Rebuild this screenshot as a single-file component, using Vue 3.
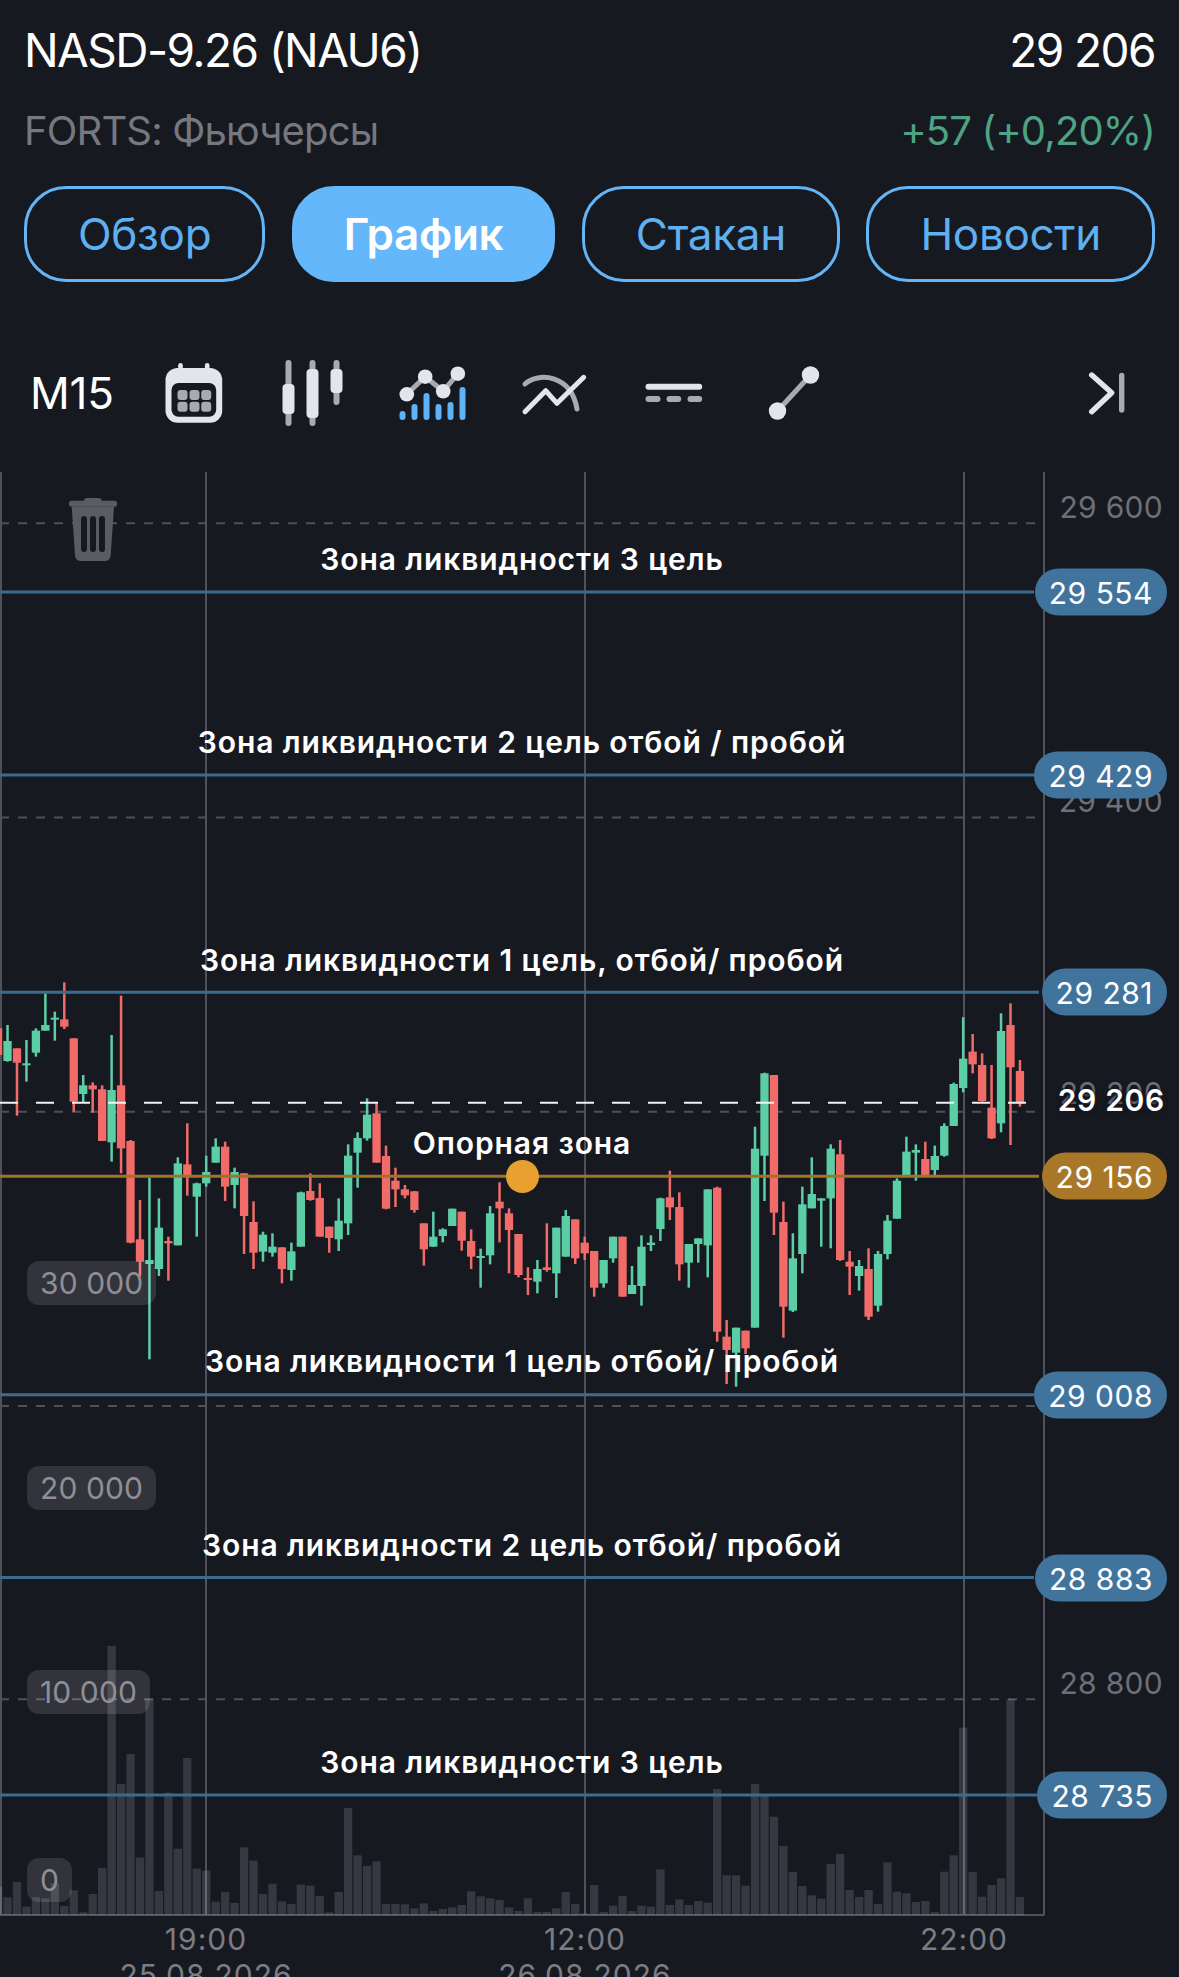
<template>
  <div class="screen">
    <header class="head">
      <div class="row row-title">
        <span>NASD-9.26 (NAU6)</span>
        <span>29 206</span>
      </div>
      <div class="row row-sub">
        <span class="market">FORTS: Фьючерсы</span>
        <span class="change">+57 (+0,20%)</span>
      </div>
      <nav class="tabs">
        <button
          v-for="tab in tabs"
          :key="tab"
          class="tab"
          :class="{ active: tab === activeTab }"
          @click="activeTab = tab"
        >
          {{ tab }}
        </button>
      </nav>
    </header>

    <div class="toolbar">
      <span class="period">M15</span>
      <button class="tool">
        <svg width="72" height="72" viewBox="0 0 72 72">
          <rect x="20.2" y="6" width="4.6" height="12" rx="2.3" fill="#e4e5ec" />
          <rect x="46.9" y="6" width="4.6" height="12" rx="2.3" fill="#e4e5ec" />
          <rect x="7.5" y="11" width="56.7" height="54.7" rx="12" fill="#e4e5ec" />
          <rect x="13.5" y="26" width="44.7" height="33.7" rx="7" fill="#171920" />
          <g fill="#a9aab0">
            <rect x="19.5" y="33" width="10" height="10" rx="3" />
            <rect x="31.5" y="33" width="10" height="10" rx="3" />
            <rect x="43.2" y="33" width="10" height="10" rx="3" />
            <rect x="19.5" y="44.7" width="10" height="10" rx="3" />
            <rect x="31.5" y="44.7" width="10" height="10" rx="3" />
            <rect x="43.2" y="44.7" width="10" height="10" rx="3" />
          </g>
        </svg>
      </button>
      <button class="tool">
        <svg width="72" height="72" viewBox="1.5 0 72 72">
          <g stroke="#a9aab0" stroke-width="6" stroke-linecap="round">
            <path d="M12 6V66M36 6V66M60 6V45" />
          </g>
          <g fill="#e4e5ec">
            <rect x="6" y="27" width="12" height="30" rx="4" />
            <rect x="30" y="12" width="12" height="49" rx="4" />
            <rect x="54" y="12" width="12" height="24" rx="4" />
          </g>
        </svg>
      </button>
      <button class="tool">
        <svg width="72" height="72" viewBox="1.5 0 72 72">
          <path
            d="M10.3 37.3L28.7 19.7L46.7 34.3L61.3 16.7"
            fill="none"
            stroke="#a9aab0"
            stroke-width="5"
          />
          <g fill="#e4e5ec">
            <circle cx="10.3" cy="37.3" r="7.3" />
            <circle cx="28.7" cy="19.7" r="7.3" />
            <circle cx="46.7" cy="34.3" r="7.3" />
            <circle cx="61.3" cy="16.7" r="7.3" />
          </g>
          <path
            d="M6 57V60M18 50V60M30 39V60M42 50V60M54 48V60M66 33V60"
            fill="none"
            stroke="#5db3f5"
            stroke-width="6"
            stroke-linecap="round"
          />
        </svg>
      </button>
      <button class="tool">
        <svg width="72" height="72" viewBox="0 0 72 72" fill="none" stroke-linecap="round" stroke-linejoin="round">
          <path d="M7 27C20 15 53 17 59 52" stroke="#a9aab0" stroke-width="5" />
          <path d="M7 54.7L27.7 33.7L39 46.3L65.7 20.3" stroke="#e4e5ec" stroke-width="5" />
        </svg>
      </button>
      <button class="tool">
        <svg width="72" height="72" viewBox="0 0 72 72" fill="none" stroke-width="6" stroke-linecap="round">
          <path d="M10.5 29.7H61.2" stroke="#e4e5ec" />
          <path d="M10.5 42H19.5M31.5 42H40.2M52.5 42H61.2" stroke="#a9aab0" />
        </svg>
      </button>
      <button class="tool">
        <svg width="72" height="72" viewBox="0 0 72 72">
          <path d="M19.5 54L52.5 18" stroke="#a9aab0" stroke-width="5" />
          <circle cx="19.5" cy="54" r="8.7" fill="#e4e5ec" />
          <circle cx="52.5" cy="18" r="8.7" fill="#e4e5ec" />
        </svg>
      </button>
      <button class="tool tool-end">
        <svg width="72" height="72" viewBox="0 0 72 72" fill="none" stroke-width="5.4" stroke-linecap="round" stroke-linejoin="round">
          <path d="M20.7 18L40.7 35.7L20.7 54.7" stroke="#e4e5ec" />
          <path d="M50.7 18.5V53" stroke="#a9aab0" />
        </svg>
      </button>
    </div>

    <section class="chart">
      <!-- viewBox keeps screen coordinates, so the chart starts at y=470 -->
      <svg class="plot" width="1179" height="1507" viewBox="0 470 1179 1507">
        <g stroke="#50515a" stroke-width="2">
          <path v-for="x in [1, 206, 585, 964, 1044]" :key="x" :d="`M${x} 472V1915`" />
          <path d="M0 1915H1044" />
        </g>
        <path
          v-for="y in gridLines"
          :key="y"
          :d="`M0 ${y}H1036`"
          stroke="#4f5057"
          stroke-width="2"
          stroke-dasharray="9 9"
        />

        <rect
          v-for="bar in volumeBars"
          :key="bar.x"
          :x="bar.x - 4.15"
          :y="bar.y"
          width="8.3"
          :height="1915 - bar.y"
          fill="#e8e8ff"
          fill-opacity="0.15"
        />

        <g v-for="c in candles" :key="c.x" :fill="c.color">
          <rect :x="c.x - 1.25" :y="c.wickTop" width="2.5" :height="c.wickHeight" />
          <rect :x="c.x - 4.15" :y="c.bodyTop" width="8.3" :height="c.bodyHeight" />
        </g>

        <path d="M0 1102.7H1026" stroke="#f2f2f4" stroke-width="2" stroke-dasharray="18 18" />
        <path
          v-for="level in levels"
          :key="level.y"
          :d="`M0 ${level.y}H${level.end}`"
          :stroke="level.gold ? '#a07428' : '#3d6b90'"
          stroke-width="3"
        />

        <g fill="#5b5c63">
          <rect x="84" y="498" width="17.7" height="6" rx="3" />
          <rect x="69" y="500.7" width="48" height="6" rx="2.5" />
          <path
            d="M71.7 506.7H114L110.7 555Q110.3 561 104.5 561H81Q75.5 561 75 555Z"
          />
        </g>
        <g stroke="#171920" stroke-width="6" stroke-linecap="round">
          <path d="M84 519V549M93 519V549M102 519V549" />
        </g>
      </svg>

      <span
        v-for="a in axisLabels"
        :key="a.text"
        class="axis-label"
        :style="{ top: a.y - 470 + 'px' }"
      >
        {{ a.text }}
      </span>
      <span class="last-price">29 206</span>

      <span
        v-for="level in levels"
        :key="level.price"
        class="level-pill"
        :class="{ gold: level.gold }"
        :style="{ top: level.y - 470 + 'px' }"
      >
        {{ level.price }}
      </span>

      <span
        v-for="note in notes"
        :key="note.y"
        class="note"
        :style="{ top: note.y - 470 + 'px' }"
      >
        {{ note.text }}
      </span>
      <i class="handle"></i>

      <span
        v-for="v in volumeLabels"
        :key="v.text"
        class="volume-label"
        :style="{ top: v.y - 470 + 'px' }"
      >
        {{ v.text }}
      </span>

      <div v-for="t in timeLabels" :key="t.time" class="time-label" :style="{ left: t.x + 'px' }">
        <span>{{ t.time }}</span>
        <span v-if="t.date">{{ t.date }}</span>
      </div>
    </section>
  </div>
</template>

<script setup>
import { ref } from "vue";

const tabs = ["Обзор", "График", "Стакан", "Новости"];
const activeTab = ref("График");

const gridLines = [523.3, 817.5, 1111.7, 1405.9, 1699.3];

const levels = [
  { y: 592, price: "29 554", end: 1034 },
  { y: 775, price: "29 429", end: 1034 },
  { y: 992.3, price: "29 281", end: 1039 },
  { y: 1176.3, price: "29 156", end: 1039, gold: true },
  { y: 1394.7, price: "29 008", end: 1034 },
  { y: 1577.5, price: "28 883", end: 1034 },
  { y: 1795, price: "28 735", end: 1037 },
];

const notes = [
  { y: 559, text: "Зона ликвидности 3 цель" },
  { y: 742, text: "Зона ликвидности 2 цель отбой / пробой" },
  { y: 960, text: "Зона ликвидности 1 цель, отбой/ пробой" },
  { y: 1143, text: "Опорная зона" },
  { y: 1361, text: "Зона ликвидности 1 цель отбой/ пробой" },
  { y: 1545, text: "Зона ликвидности 2 цель отбой/ пробой" },
  { y: 1762, text: "Зона ликвидности 3 цель" },
];

const axisLabels = [
  { y: 506.7, text: "29 600" },
  { y: 800.8, text: "29 400" },
  { y: 1093, text: "29 200" },
  { y: 1682.7, text: "28 800" },
];

const volumeLabels = [
  { y: 1282.7, text: "30 000" },
  { y: 1487.5, text: "20 000" },
  { y: 1692.3, text: "10 000" },
  { y: 1879.5, text: "0" },
];

const timeLabels = [
  { x: 206, time: "19:00", date: "25.08.2026" },
  { x: 585, time: "12:00", date: "26.08.2026" },
  { x: 964, time: "22:00" },
];

// [colour, wick top, body top, body bottom, wick bottom], thirds of a pixel below y=960
const rawCandles = [
  ["r", 205, 205, 285, 285], ["g", 195, 243, 303, 305], ["r", 265, 265, 308, 467], ["g", 240, 310, 314, 365],
  ["g", 205, 212, 278, 290], ["g", 100, 195, 212, 212], ["g", 155, 173, 177, 242], ["r", 67, 178, 200, 207],
  ["r", 235, 235, 425, 455], ["g", 345, 376, 402, 428], ["r", 367, 376, 388, 458], ["r", 376, 388, 543, 543],
  ["g", 225, 390, 547, 605], ["r", 107, 376, 565, 640], ["r", 540, 543, 848, 850], ["r", 720, 838, 905, 950],
  ["g", 653, 900, 912, 1198], ["g", 715, 803, 927, 948], ["r", 830, 843, 850, 962], ["g", 592, 610, 856, 856],
  ["r", 490, 613, 650, 707], ["g", 668, 670, 710, 830], ["g", 587, 636, 670, 680], ["g", 535, 560, 608, 608],
  ["r", 545, 560, 680, 723], ["g", 623, 636, 675, 745], ["r", 640, 640, 768, 882], ["r", 724, 786, 878, 927],
  ["g", 815, 824, 875, 905], ["g", 820, 860, 878, 890], ["r", 862, 862, 927, 970], ["g", 848, 874, 930, 962],
  ["g", 695, 697, 860, 860], ["r", 640, 693, 720, 722], ["r", 670, 714, 830, 830], ["r", 800, 800, 834, 878],
  ["g", 715, 782, 838, 873], ["g", 553, 587, 790, 825], ["g", 517, 534, 578, 683], ["g", 415, 464, 535, 542],
  ["r", 430, 460, 608, 608], ["r", 557, 588, 746, 748], ["r", 623, 662, 688, 741], ["r", 675, 688, 706, 715],
  ["r", 693, 694, 750, 758], ["r", 790, 790, 868, 917], ["g", 755, 830, 860, 860], ["g", 805, 808, 828, 847],
  ["g", 746, 746, 798, 798], ["r", 755, 755, 842, 872], ["r", 808, 843, 890, 927], ["g", 866, 888, 894, 983],
  ["g", 738, 760, 886, 913], ["r", 667, 725, 745, 847], ["r", 745, 760, 810, 940], ["r", 822, 822, 945, 952],
  ["r", 922, 954, 957, 1005], ["g", 900, 927, 965, 1000], ["r", 790, 922, 930, 935], ["g", 803, 803, 940, 1014],
  ["g", 750, 768, 890, 890], ["r", 778, 778, 895, 912], ["r", 830, 848, 880, 900], ["r", 873, 873, 983, 1010],
  ["g", 900, 900, 970, 983], ["g", 830, 830, 895, 908], ["r", 830, 830, 1010, 1010], ["g", 918, 975, 1002, 1002],
  ["g", 826, 860, 978, 1037], ["g", 826, 848, 855, 873], ["g", 713, 715, 807, 843], ["r", 632, 712, 742, 780],
  ["r", 697, 741, 913, 962], ["g", 852, 852, 908, 983], ["g", 835, 835, 852, 908], ["g", 688, 688, 856, 952],
  ["r", 680, 683, 1115, 1145], ["r", 1080, 1130, 1170, 1272], ["g", 1103, 1103, 1178, 1280], ["r", 1112, 1112, 1165, 1182],
  ["g", 500, 566, 1103, 1103], ["g", 338, 340, 587, 723], ["r", 345, 345, 758, 825], ["r", 725, 786, 1040, 1133],
  ["g", 820, 895, 1052, 1056], ["g", 680, 733, 882, 940], ["g", 592, 702, 745, 745], ["g", 715, 715, 722, 860],
  ["g", 553, 566, 715, 865], ["r", 540, 583, 900, 903], ["r", 873, 905, 920, 1005], ["g", 900, 918, 948, 992],
  ["r", 865, 927, 1070, 1080], ["g", 873, 882, 1037, 1055], ["g", 765, 782, 882, 898], ["g", 655, 662, 776, 776],
  ["g", 530, 575, 648, 648], ["g", 553, 570, 578, 662], ["r", 545, 597, 645, 645], ["g", 557, 588, 630, 645],
  ["g", 490, 498, 587, 590], ["g", 368, 372, 498, 498], ["g", 172, 296, 384, 397], ["r", 222, 275, 313, 340],
  ["r", 280, 315, 423, 425], ["r", 315, 443, 535, 537], ["g", 160, 213, 490, 517], ["r", 130, 195, 322, 555],
  ["r", 300, 333, 430, 440],
];

// volume bar tops, thirds of a pixel below y=1620
const rawVolumes = [
  800, 832, 786, 860, 832, 835, 790, 858, 811, 877, 822, 744, 78, 492, 402, 712, 238, 813, 518, 686, 414, 746,
  752, 845, 816, 849, 682, 722, 822, 791, 844, 852, 794, 797, 828, 877, 816, 564, 706, 738, 724, 852, 852, 853,
  865, 850, 873, 867, 862, 855, 814, 829, 835, 840, 862, 873, 835, 876, 876, 865, 816, 852, 880, 795, 876, 857,
  828, 873, 857, 860, 748, 855, 838, 855, 843, 848, 507, 766, 766, 797, 492, 525, 590, 678, 756, 798, 826, 836,
  732, 702, 810, 831, 810, 852, 727, 815, 820, 846, 843, 876, 755, 706, 323, 756, 830, 795, 775, 238, 831,
];

const slotX = (i) => -1.94 + 9.462 * i;

const candles = rawCandles.map(([c, wickTop, bodyTop, bodyBottom, wickBottom], i) => ({
  x: slotX(i),
  color: c === "g" ? "#5ccea6" : "#f16c69",
  wickTop: 960 + wickTop / 3,
  wickHeight: (wickBottom - wickTop) / 3,
  bodyTop: 960 + bodyTop / 3,
  bodyHeight: Math.max((bodyBottom - bodyTop) / 3, 2),
}));

const volumeBars = rawVolumes.map((top, i) => ({ x: slotX(i), y: 1620 + top / 3 }));
</script>

<style>
html,
body {
  background: #171920;
}
</style>

<style scoped>
.screen {
  width: 1179px;
  height: 1977px;
  overflow: hidden;
  background: #171920;
  color: #fff;
  font-family: Inter, "Noto Sans", sans-serif;
}

.head {
  padding: 18px 24px 0;
}

.row {
  display: flex;
  justify-content: space-between;
}

.row-title {
  font-size: 46px;
  line-height: 64px;
  letter-spacing: -1.55px;
}

.row-sub {
  margin-top: 25px;
  font-size: 40px;
  line-height: 48px;
  letter-spacing: -0.85px;
}

.market {
  color: #77777e;
}

.change {
  color: #4ea383;
}

.tabs {
  display: flex;
  justify-content: space-between;
  margin-top: 31px;
}

.tab {
  height: 96px;
  padding: 0 51px;
  background: none;
  border: 3px solid #64b5f6;
  border-radius: 42px;
  color: #5fb0f0;
  font-family: inherit;
  font-size: 44px;
  letter-spacing: -0.3px;
}

.tab.active {
  padding: 0 49px;
  background: #64b7fb;
  border-color: #64b7fb;
  color: #fff;
  font-weight: 600;
}

.toolbar {
  display: flex;
  align-items: center;
  height: 72px;
  margin-top: 75px;
  padding: 0 36px 0 30px;
}

.period {
  width: 103.5px;
  font-size: 44px;
  letter-spacing: -0.2px;
}

.tool {
  display: flex;
  justify-content: center;
  width: 120px;
  padding: 0;
  background: none;
  border: none;
}

.tool-end {
  width: 72px;
  margin-left: auto;
}

.chart {
  position: relative;
  height: 1507px;
  margin-top: 41px;
}

.plot {
  display: block;
}

.axis-label {
  position: absolute;
  right: 16px;
  transform: translateY(-50%);
  color: #6e6f77;
  font-size: 30px;
  line-height: 34px;
  letter-spacing: 0.3px;
  white-space: nowrap;
}

.last-price {
  position: absolute;
  top: 630px;
  right: 14px;
  transform: translateY(-50%);
  font-size: 30px;
  font-weight: 600;
  line-height: 34px;
  letter-spacing: 0.7px;
  text-shadow: 0 0 4px #171920, 0 2px 4px #171920;
}

.level-pill {
  position: absolute;
  right: 12px;
  height: 47px;
  padding: 0 14px;
  transform: translateY(-50%);
  background: #41749d;
  border-radius: 24px;
  font-size: 30px;
  line-height: 48px;
  letter-spacing: 0.5px;
  white-space: nowrap;
}

.level-pill.gold {
  background: #a97728;
}

.note {
  position: absolute;
  left: 522px;
  transform: translate(-50%, -50%);
  font-size: 30px;
  font-weight: 600;
  line-height: 34px;
  letter-spacing: 0.9px;
  white-space: nowrap;
}

.handle {
  position: absolute;
  left: 505.5px;
  top: 690px;
  width: 33px;
  height: 33px;
  background: #e8a030;
  border-radius: 50%;
}

.volume-label {
  position: absolute;
  left: 27px;
  height: 44px;
  padding: 0 13px;
  transform: translateY(-50%);
  background: rgba(255, 255, 255, 0.12);
  border-radius: 12px;
  color: #8e8f96;
  font-size: 30px;
  line-height: 44px;
  letter-spacing: 0.1px;
  white-space: nowrap;
}

.time-label {
  position: absolute;
  top: 1451px;
  display: flex;
  flex-direction: column;
  align-items: center;
  transform: translateX(-50%);
  color: #7b7c84;
  font-size: 30px;
  line-height: 36px;
  letter-spacing: 1px;
  white-space: nowrap;
}
</style>
